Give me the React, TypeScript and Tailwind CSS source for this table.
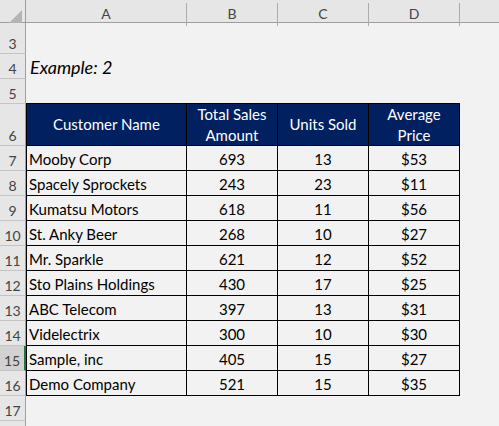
import type { ReactNode } from 'react';

type Row = { name: string; sales: number; units: number; price: string };

const rows: Row[] = [
  { name: 'Mooby Corp', sales: 693, units: 13, price: '$53' },
  { name: 'Spacely Sprockets', sales: 243, units: 23, price: '$11' },
  { name: 'Kumatsu Motors', sales: 618, units: 11, price: '$56' },
  { name: 'St. Anky Beer', sales: 268, units: 10, price: '$27' },
  { name: 'Mr. Sparkle', sales: 621, units: 12, price: '$52' },
  { name: 'Sto Plains Holdings', sales: 430, units: 17, price: '$25' },
  { name: 'ABC Telecom', sales: 397, units: 13, price: '$31' },
  { name: 'Videlectrix', sales: 300, units: 10, price: '$30' },
  { name: 'Sample, inc', sales: 405, units: 15, price: '$27' },
  { name: 'Demo Company', sales: 521, units: 15, price: '$35' },
];

const font = { fontFamily: 'Lato, "Open Sans", sans-serif' };

function RowNum({ n, active }: { n?: number; active?: boolean }) {
  return (
    <div
      className={
        'flex items-end justify-center border-b border-[#c4c4c4] pb-0 text-[14px] leading-[19px] text-[#444] ' +
        (active ? 'bg-[#d2d2d2] border-r-2 border-r-[#217346]' : 'bg-[#e6e6e6] border-r border-r-[#9e9e9e]')
      }
    >
      {n}
    </div>
  );
}

function Cell({ children, left, align = 'center' }: { children?: ReactNode; left?: boolean; align?: 'left' | 'center' }) {
  return (
    <div
      className={
        'flex items-end border-b border-r border-black pb-[1px] text-[15px] leading-[19px] text-black ' +
        (left ? 'border-l ' : '') +
        (align === 'left' ? 'justify-start pl-[2px]' : 'justify-center')
      }
    >
      {children}
    </div>
  );
}

function HeadCell({ children, left }: { children: ReactNode; left?: boolean }) {
  return (
    <div
      className={
        'flex items-center justify-center border-b border-r border-black bg-[#002060] text-center text-[15px] leading-[21px] text-white ' +
        (left ? 'border-l' : '')
      }
    >
      {children}
    </div>
  );
}

export default function App() {
  return (
    <div className="h-[426px] w-[499px] overflow-hidden bg-[#f2f2f2]" style={font}>
      {/* column letters */}
      <div className="grid h-[23px] grid-cols-[26px_161px_91px_91px_91px_1fr] border-b border-[#9e9e9e] bg-[#e6e6e6] text-[14px] text-[#444]">
        <div className="relative border-r border-[#9e9e9e]">
          <svg className="absolute bottom-[3px] right-[3px]" width="13" height="13" viewBox="0 0 13 13">
            <polygon points="13,0 13,13 0,13" fill="#b4b4b4" />
          </svg>
        </div>
        {['A', 'B', 'C', 'D'].map((c) => (
          <div key={c} className="flex items-center justify-center pt-[3px]">
            <div className="flex h-full w-full items-center justify-center border-r border-[#ababab] pb-[2px]">{c}</div>
          </div>
        ))}
        <div />
      </div>

      <div className="grid grid-cols-[26px_161px_91px_91px_91px_1fr] grid-rows-[31px_25px_25px_42px_repeat(12,25px)]">
        {/* row 3 */}
        <RowNum n={3} />
        <div className="col-span-5" />
        {/* row 4 */}
        <RowNum n={4} />
        <div className="col-span-5 flex items-end pb-[1px] pl-[4px] text-[18px] italic leading-[22px] text-black">Example: 2</div>
        {/* row 5 */}
        <RowNum n={5} />
        <div className="border-b border-black" />
        <div className="border-b border-black" />
        <div className="border-b border-black" />
        <div className="border-b border-black" />
        <div />
        {/* row 6 header */}
        <RowNum n={6} />
        <HeadCell left>Customer Name</HeadCell>
        <HeadCell>
          Total Sales
          <br />
          Amount
        </HeadCell>
        <HeadCell>Units Sold</HeadCell>
        <HeadCell>
          Average
          <br />
          Price
        </HeadCell>
        <div />
        {rows.map((r, i) => (
          <div key={r.name} className="contents">
            <RowNum n={i + 7} active={i + 7 === 15} />
            <Cell left align="left">
              {r.name}
            </Cell>
            <Cell>{r.sales}</Cell>
            <Cell>{r.units}</Cell>
            <Cell>{r.price}</Cell>
            <div />
          </div>
        ))}
        <RowNum n={17} />
        <div className="col-span-5" />
        <RowNum />
        <div className="col-span-5" />
      </div>
    </div>
  );
}
